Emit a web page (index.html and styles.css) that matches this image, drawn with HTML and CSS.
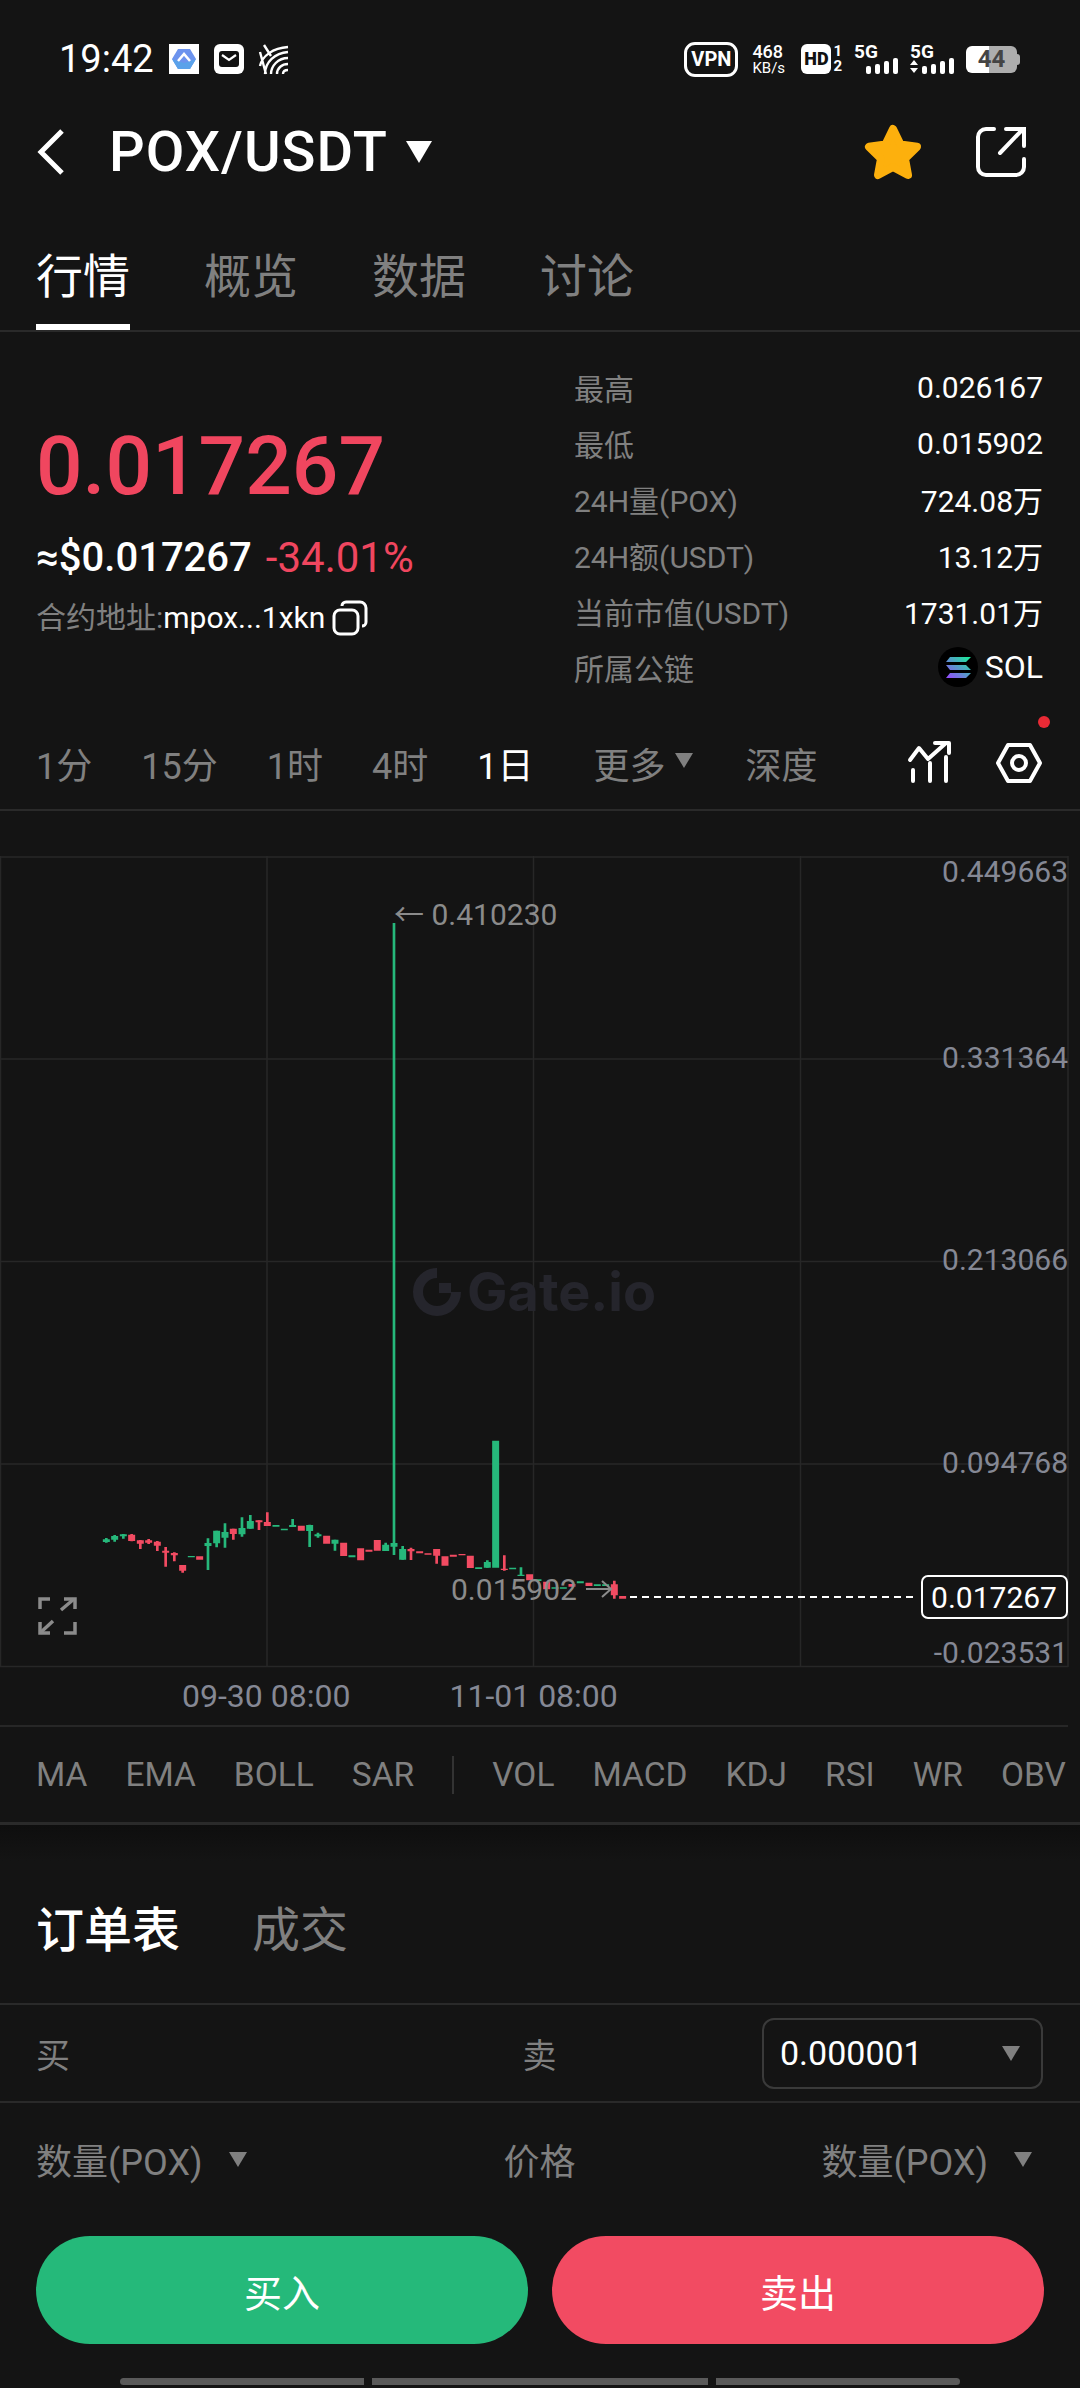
FILE: index.html

```html
<!DOCTYPE html>
<html lang="zh">
<head>
  <meta charset="UTF-8" />
  <meta name="viewport" content="width=device-width, initial-scale=1.0" />
  <title>POX/USDT</title>
  <link rel="stylesheet" href="styles.css">
</head>
<body>
  <div class="status-bar">
    <span class="clock">19:42</span>
    <svg class="st-app" viewBox="0 0 30 30">
      <rect width="30" height="30" fill="#fff"/>
      <path d="M9 5H21L27 15L21 25H9L3 15Z" fill="#6c93ee"/>
      <path d="M3 15L9 25H21L27 15L15 19Z" fill="#5aa2ea"/>
      <path d="M9 17L15 10L21 17" fill="none" stroke="#fff" stroke-width="2.5"/>
    </svg>
    <svg class="st-app" viewBox="0 0 30 30">
      <rect width="30" height="30" rx="6" fill="#fff"/>
      <rect x="5" y="7" width="20" height="16" rx="3" fill="#111"/>
      <path d="M8 11L15 16L22 11" fill="none" stroke="#fff" stroke-width="2.2"/>
    </svg>
    <svg class="st-app" viewBox="0 0 30 30" fill="none" stroke="#fff" stroke-width="2.4">
      <path d="M1 8L7 30M5 1L12 12M1 22C3 12 14 4 29 3M6 30C6 18 16 9 29 8M12 30C12 22 19 14 29 14M18 30C18 24 23 20 29 20M24 30C24 27 26 26 29 26"/>
    </svg>

    <div class="status-right">
      <span class="vpn">VPN</span>
      <span class="speed"><b>468</b><i>KB/s</i></span>
      <span class="hd-group">
        <span class="hd">HD</span>
        <span class="sim"><b>1</b><b>2</b></span>
      </span>
      <svg class="st-signal" viewBox="0 0 44 30">
        <text x="0" y="14" class="st-5g">5G</text>
        <rect x="12" y="22" width="5" height="8" rx="2" fill="#fff"/>
        <rect x="21" y="20" width="5" height="10" rx="2" fill="#fff"/>
        <rect x="30" y="17" width="5" height="13" rx="2" fill="#fff"/>
        <rect x="39" y="14" width="5" height="16" rx="2" fill="#fff"/>
      </svg>
      <svg class="st-signal" viewBox="0 0 44 30">
        <text x="0" y="14" class="st-5g">5G</text>
        <path d="M0 21L4 16L8 21ZM0 24L8 24L4 29Z" fill="#fff"/>
        <rect x="12" y="22" width="5" height="8" rx="2" fill="#fff"/>
        <rect x="21" y="20" width="5" height="10" rx="2" fill="#fff"/>
        <rect x="30" y="17" width="5" height="13" rx="2" fill="#fff"/>
        <rect x="39" y="14" width="5" height="16" rx="2" fill="#fff"/>
      </svg>
      <span class="battery">44</span>
    </div>
  </div>

  <div class="nav">
    <svg class="nav-back" viewBox="0 0 28 46" fill="none" stroke="#fff" stroke-width="5">
      <path d="M25 2L4 23L25 44"/>
    </svg>
    <span class="pair">POX/USDT</span>
    <span class="caret caret-title"></span>
    <svg class="nav-star" viewBox="0 0 58 56">
      <path d="M29 5L36.5 20.5L53 22.8L41 34.6L44 51L29 43L14 51L17 34.6L5 22.8L21.5 20.5Z" fill="#fdb00d" stroke="#fdb00d" stroke-width="8" stroke-linejoin="round"/>
    </svg>
    <svg class="nav-share" viewBox="0 0 52 52" fill="none" stroke="#fff" stroke-width="4" stroke-linecap="round">
      <path d="M19 3H11A8 8 0 0 0 3 11V41A8 8 0 0 0 11 49H41A8 8 0 0 0 49 41V33"/>
      <path d="M25 27L47 4M31 3H49V20"/>
    </svg>
  </div>

  <div class="tabs">
    <span class="tab active">行情</span>
    <span class="tab">概览</span>
    <span class="tab">数据</span>
    <span class="tab">讨论</span>
  </div>

  <div class="summary">
    <div class="summary-left">
      <div class="price">0.017267</div>
      <div class="price-sub">≈$0.017267<span class="down">-34.01%</span></div>
      <div class="contract">
        <span class="muted">合约地址:</span>mpox...1xkn
        <svg class="copy" viewBox="0 0 36 36" fill="none" stroke="#fff" stroke-width="3">
          <rect x="2" y="10" width="24" height="24" rx="6"/>
          <path d="M10 6A4 4 0 0 1 14 2H28A6 6 0 0 1 34 8V22A4 4 0 0 1 30 26"/>
        </svg>
      </div>
    </div>
    <div class="stats">
      <div class="stat"><span>最高</span><b>0.026167</b></div>
      <div class="stat"><span>最低</span><b>0.015902</b></div>
      <div class="stat"><span>24H量(POX)</span><b>724.08万</b></div>
      <div class="stat"><span>24H额(USDT)</span><b>13.12万</b></div>
      <div class="stat"><span>当前市值(USDT)</span><b>1731.01万</b></div>
      <div class="stat">
        <span>所属公链</span>
        <b class="chain">
          <svg class="sol" viewBox="0 0 40 40">
            <defs>
              <linearGradient id="solg" x1="0" y1="1" x2="1" y2="0">
                <stop offset="0" stop-color="#9945ff"/>
                <stop offset="1" stop-color="#14f195"/>
              </linearGradient>
            </defs>
            <circle cx="20" cy="20" r="20" fill="#000"/>
            <path d="M12 10H33L28 15H8ZM8 18H28L33 23H12ZM12 26H33L28 31H8Z" fill="url(#solg)"/>
          </svg>
          SOL
        </b>
      </div>
    </div>
  </div>

  <div class="periods">
    <span>1分</span>
    <span>15分</span>
    <span>1时</span>
    <span>4时</span>
    <span class="active">1日</span>
    <span class="more">更多<i class="caret caret-more"></i></span>
    <span class="depth">深度</span>
    <div class="period-tools">
      <svg class="tool-trend" viewBox="0 0 44 44" fill="none" stroke="#fff" stroke-width="4" stroke-linecap="round" stroke-linejoin="round">
        <path d="M2 19L11 7L20 18L38 2M27 2H41V12"/>
        <path d="M5 29V40M22 22V40M38 16V40"/>
      </svg>
      <svg class="tool-hex" viewBox="0 0 46 42" fill="none" stroke="#fff" stroke-width="4" stroke-linejoin="round">
        <path d="M2 21L12 3H34L44 21L34 39H12Z"/>
        <circle cx="23" cy="21" r="7"/>
      </svg>
      <span class="tool-dot"></span>
    </div>
  </div>

  <svg class="chart" viewBox="0 856 1080 811">
    <g class="grid">
      <path d="M0 857H1068M0 1059H1068M0 1261.5H1068M0 1464H1068M0 1666.5H1068"/>
      <path d="M0.5 856V1667M267 856V1667M533.5 856V1667M800.5 856V1667M1068 856V1667"/>
    </g>

    <g class="mark">
      <path d="M437 1273A19 19 0 1 0 456 1292" fill="none" stroke="#25252c" stroke-width="10"/>
      <rect x="439" y="1283" width="12" height="10" fill="#25252c"/>
      <text x="467" y="1311" class="mark-text">Gate.io</text>
    </g>

    <g transform="translate(80 1400) scale(.3333)">
      <path class="wick up" d="M79 414V428M104 405V425M130 402V416M384 415V510M410 392V442M435 370V443M486 352V410M511 345V386M638 357V381M689 374V441M714 398V413M765 419V452"/>
      <path class="body up" d="M79 418V426M104 408V419M130 403V409M334 468V472M384 429V438M410 392V430M435 396V413M486 384V403M511 363V386M588 375V380M613 386V391M638 375V381M689 375V393M714 403V409M765 419V431M816 466V472"/>
      <path class="wick dn" d="M155 402V424M181 420V447M206 417V432M232 423V453M257 441V500M283 457V484M308 495V518M460 386V419M537 361V390M562 337V378"/>
      <path class="body dn" d="M155 404V423M181 421V431M206 421V428M232 425V437M257 452V458M283 459V466M308 495V512M359 469V479M460 386V402M537 361V367M562 366V378M664 377V392M740 407V431M791 428V468M842 445V481M867 449V455M892 420V452"/>
    </g>
    <g transform="translate(380 1400) scale(.3333)">
      <path class="wick up" d="M17 428V453M42 -1431V465M68 438V479M322 481V503M423 502V527"/>
      <path class="body up" d="M17 434V453M42 429V440M68 447V479M296 502V507M322 486V503M347 122V503M398 503V508M423 524V528M474 538V543M525 562V566M550 562V566M601 544V550M652 553V558M677 553V558"/>
      <path class="wick dn" d="M93 443V480M170 447V491M373 466V512M703 542V596"/>
      <path class="body dn" d="M93 447V454M119 454V460M144 460V464M170 447V467M195 469V497M220 464V470M246 462V466M271 467V504M373 506V510M449 523V541M500 545V568M576 552V560M627 548V558M703 553V586M728 588V596"/>
    </g>

    <text x="394" y="925" class="peak">← 0.410230</text>
    <text x="451" y="1600" class="peak">0.015902</text>
    <path class="peak-arrow" d="M586 1589H611M602 1581L611 1589L602 1597"/>

    <text x="1068" y="882" class="axis">0.449663</text>
    <text x="1068" y="1068" class="axis">0.331364</text>
    <text x="1068" y="1270" class="axis">0.213066</text>
    <text x="1068" y="1473" class="axis">0.094768</text>
    <text x="1068" y="1663" class="axis">-0.023531</text>

    <path class="last-line" d="M630 1597H918"/>
    <rect class="last-box" x="922" y="1576" width="145" height="42" rx="6"/>
    <text x="994" y="1608" class="last-text">0.017267</text>

    <g fill="none" stroke="#8b8b8b" stroke-width="3.5">
      <path d="M40 1609V1599H50M64 1599H75V1609M75 1622V1633H64M50 1633H40V1622"/>
      <path d="M61 1610L74 1599M40 1633L53 1621"/>
    </g>
  </svg>

  <div class="time-axis">
    <span>09-30 08:00</span>
    <span>11-01 08:00</span>
  </div>

  <div class="indicators">
    <span>MA</span>
    <span>EMA</span>
    <span>BOLL</span>
    <span>SAR</span>
    <i class="ind-sep"></i>
    <span>VOL</span>
    <span>MACD</span>
    <span>KDJ</span>
    <span>RSI</span>
    <span>WR</span>
    <span>OBV</span>
  </div>

  <div class="order-tabs">
    <span class="active">订单表</span>
    <span>成交</span>
  </div>

  <div class="book-row book-side">
    <span>买</span>
    <span>卖</span>
    <div class="precision">0.000001<i class="caret caret-more"></i></div>
  </div>

  <div class="book-row book-head">
    <span class="with-caret">数量(POX)<i class="caret caret-more"></i></span>
    <span>价格</span>
    <span class="with-caret head-right">数量(POX)<i class="caret caret-more"></i></span>
  </div>

  <div class="trade-btns">
    <button class="btn-buy">买入</button>
    <button class="btn-sell">卖出</button>
  </div>

  <div class="home-bars">
    <i></i><i></i><i></i>
  </div>
</body>
</html>
```

FILE: styles.css

```css
* {
  box-sizing: border-box;
}
body {
  margin: 0;
  width: 1080px;
  height: 2388px;
  overflow: hidden;
  background: #141414;
  color: #fff;
  font-family: Roboto, "Noto Sans CJK SC", sans-serif;
}
i {
  font-style: normal;
}
svg {
  display: block;
  flex: none;
  overflow: visible;
}

/* status bar */
.status-bar {
  display: flex;
  align-items: center;
  height: 118px;
  padding-left: 59px;
}
.clock {
  font-size: 38px;
  width: 93px;
  margin-right: 17px;
}
.st-app {
  width: 30px;
  height: 30px;
  margin-right: 15px;
}
.status-right {
  display: flex;
  align-items: center;
  gap: 12px;
  margin-left: auto;
  margin-right: 60px;
}
.vpn {
  width: 54px;
  height: 35px;
  border: 3px solid #fff;
  border-radius: 11px;
  font-size: 20px;
  font-weight: 700;
  line-height: 29px;
  text-align: center;
}
.speed {
  display: flex;
  flex-direction: column;
  width: 37px;
  margin-left: 2px;
}
.speed b {
  font-size: 18px;
  font-weight: 500;
  line-height: 18px;
}
.speed i {
  font-size: 15px;
  line-height: 15px;
}
.hd-group {
  display: flex;
  gap: 2px;
}
.hd {
  width: 30px;
  height: 30px;
  border-radius: 6px;
  background: #fff;
  color: #111;
  font-size: 18px;
  font-weight: 900;
  line-height: 30px;
  text-align: center;
}
.sim {
  display: flex;
  flex-direction: column;
  font-size: 15px;
  line-height: 15px;
}
.st-signal {
  width: 44px;
  height: 30px;
}
.st-5g {
  font-size: 19px;
  font-weight: 700;
  fill: #fff;
}
.battery {
  position: relative;
  width: 51px;
  height: 27px;
  margin-right: 3px;
  border-radius: 6px;
  background: linear-gradient(90deg, #fff 45%, #adadad 45%);
  color: #444;
  font-size: 24px;
  font-weight: 700;
  line-height: 27px;
  text-align: center;
}
.battery::after {
  content: "";
  position: absolute;
  right: -3px;
  top: 8px;
  width: 3px;
  height: 11px;
  border-radius: 0 3px 3px 0;
  background: #adadad;
}

/* nav */
.nav {
  display: flex;
  align-items: center;
  height: 68px;
  padding-left: 37px;
}
.nav-back {
  width: 28px;
  height: 46px;
  margin-right: 44px;
}
.pair {
  font-size: 56px;
  font-weight: 500;
  letter-spacing: 1px;
  line-height: 68px;
  width: 297px;
}
.caret {
  display: inline-block;
  width: 0;
  height: 0;
  border-style: solid;
  border-color: #808080 transparent transparent;
}
.caret-title {
  border-width: 22px 13px 0;
  border-top-color: #fff;
}
.caret-more {
  border-width: 15px 9px 0;
}
.nav-star {
  width: 58px;
  height: 56px;
  margin-left: 432px;
}
.nav-share {
  width: 52px;
  height: 52px;
  margin-left: 53px;
}

/* tabs */
.tabs {
  display: flex;
  align-items: flex-end;
  gap: 74px;
  height: 146px;
  padding-left: 36px;
  border-bottom: 2px solid #2a2a2a;
}
.tab {
  height: 77px;
  border-bottom: 6px solid transparent;
  color: #808080;
  font-size: 47px;
  line-height: 47px;
}
.tab.active {
  color: #fff;
  border-bottom-color: #fff;
}

/* price summary */
.summary {
  display: flex;
  height: 385px;
}
.summary-left {
  width: 574px;
  padding: 84px 0 0 36px;
}
.price {
  color: #f0465f;
  font-size: 82px;
  font-weight: 500;
  line-height: 100px;
}
.price-sub {
  display: flex;
  align-items: center;
  gap: 14px;
  margin-top: 17px;
  font-size: 40px;
  font-weight: 500;
  line-height: 50px;
}
.down {
  color: #f0465f;
  font-size: 42px;
  font-weight: 400;
}
.contract {
  display: flex;
  align-items: center;
  margin-top: 10px;
  font-size: 30px;
  line-height: 50px;
}
.muted {
  color: #808080;
}
.copy {
  width: 36px;
  height: 36px;
  margin-left: 7px;
}
.stats {
  width: 469px;
  padding-top: 27px;
}
.stat {
  display: flex;
  justify-content: space-between;
  align-items: center;
  height: 56px;
  color: #808080;
  font-size: 30px;
}
.stat b {
  color: #fff;
  font-weight: 400;
}
.chain {
  display: flex;
  align-items: center;
  gap: 7px;
  font-size: 32px;
}
.sol {
  width: 40px;
  height: 40px;
}

/* periods */
.periods {
  display: flex;
  align-items: center;
  gap: 49px;
  height: 94px;
  padding-left: 36px;
  border-bottom: 2px solid #2a2a2a;
  color: #808080;
  font-size: 36px;
}
.periods .active {
  color: #fff;
}
.more {
  display: flex;
  align-items: center;
  gap: 10px;
  margin-left: 11px;
}
.more .caret {
  margin-top: -6px;
}
.depth {
  margin-left: 3px;
}
.period-tools {
  position: relative;
  display: flex;
  align-items: center;
  gap: 44px;
  margin-left: 42px;
}
.tool-trend {
  width: 44px;
  height: 44px;
}
.tool-hex {
  width: 46px;
  height: 42px;
}
.tool-dot {
  position: absolute;
  right: -8px;
  top: -25px;
  width: 12px;
  height: 12px;
  border-radius: 50%;
  background: #e92a35;
}

/* chart */
.chart {
  width: 1080px;
  height: 811px;
  margin-top: 45px;
}
.grid path {
  fill: none;
  stroke: #272727;
  stroke-width: 1.5;
}
.mark-text {
  font-family: Inter, sans-serif;
  font-size: 54px;
  font-weight: 700;
  fill: #25252c;
}
.wick {
  fill: none;
  stroke-width: 8;
}
.body {
  fill: none;
  stroke-width: 21;
}
.up {
  stroke: #26b87b;
}
.dn {
  stroke: #f24b62;
}
.peak {
  font-size: 30px;
  fill: #8b8b8b;
}
.peak-arrow {
  fill: none;
  stroke: #8b8b8b;
  stroke-width: 2;
}
.axis {
  font-size: 30px;
  text-anchor: end;
  fill: #858894;
}
.last-line {
  stroke: #fff;
  stroke-width: 2;
  stroke-dasharray: 7 5;
}
.last-box {
  fill: #141414;
  stroke: #fff;
  stroke-width: 2;
}
.last-text {
  font-size: 30px;
  text-anchor: middle;
  fill: #fff;
}
.time-axis {
  display: flex;
  gap: 99px;
  align-items: center;
  height: 60px;
  margin-right: 12px;
  padding-left: 182px;
  border-bottom: 2px solid #272727;
  color: #858894;
  font-size: 32px;
}

/* indicators */
.indicators {
  display: flex;
  align-items: center;
  gap: 38px;
  height: 98px;
  padding-left: 36px;
  border-bottom: 3px solid #2a2a2a;
  color: #808080;
  font-size: 33.5px;
  white-space: nowrap;
  overflow: hidden;
}
.ind-sep {
  width: 2px;
  height: 38px;
  background: #333;
}

/* order book */
.order-tabs {
  display: flex;
  align-items: center;
  gap: 72px;
  height: 180px;
  padding: 24px 0 0 36px;
  border-bottom: 2px solid #2a2a2a;
  background: linear-gradient(#0e0e0e, #141414 36px);
  color: #808080;
  font-size: 48px;
}
.order-tabs .active {
  color: #fff;
  font-weight: 500;
}
.book-row {
  display: grid;
  grid-template-columns: 1fr auto 1fr;
  align-items: center;
  padding: 0 37px 0 36px;
  color: #808080;
  font-size: 34px;
}
.book-row > :last-child {
  justify-self: end;
}
.book-side {
  height: 98px;
  border-bottom: 2px solid #2a2a2a;
}
.book-head {
  height: 112px;
  font-size: 36px;
}
.precision {
  display: flex;
  justify-content: space-between;
  align-items: center;
  width: 281px;
  height: 71px;
  padding: 0 21px 0 16px;
  border: 2px solid #3a3a3a;
  border-radius: 12px;
  color: #fff;
  font-size: 34px;
}
.with-caret {
  display: flex;
  align-items: center;
  gap: 26px;
}
.head-right {
  margin-right: 11px;
}
.trade-btns {
  display: flex;
  gap: 24px;
  margin-top: 21px;
  padding: 0 36px;
}
.trade-btns button {
  width: 492px;
  height: 108px;
  border: none;
  border-radius: 54px;
  color: #fff;
  font-family: inherit;
  font-size: 38px;
}
.btn-buy {
  background: #25b97a;
}
.btn-sell {
  background: #f24b62;
}
.home-bars {
  display: flex;
  gap: 8px;
  margin-top: 34px;
  padding-left: 120px;
}
.home-bars i {
  height: 7px;
  background: #5a5a5a;
}
.home-bars i:nth-child(1) {
  width: 244px;
  border-radius: 4px 0 0 4px;
}
.home-bars i:nth-child(2) {
  width: 336px;
}
.home-bars i:nth-child(3) {
  width: 244px;
  border-radius: 0 4px 4px 0;
}
```
